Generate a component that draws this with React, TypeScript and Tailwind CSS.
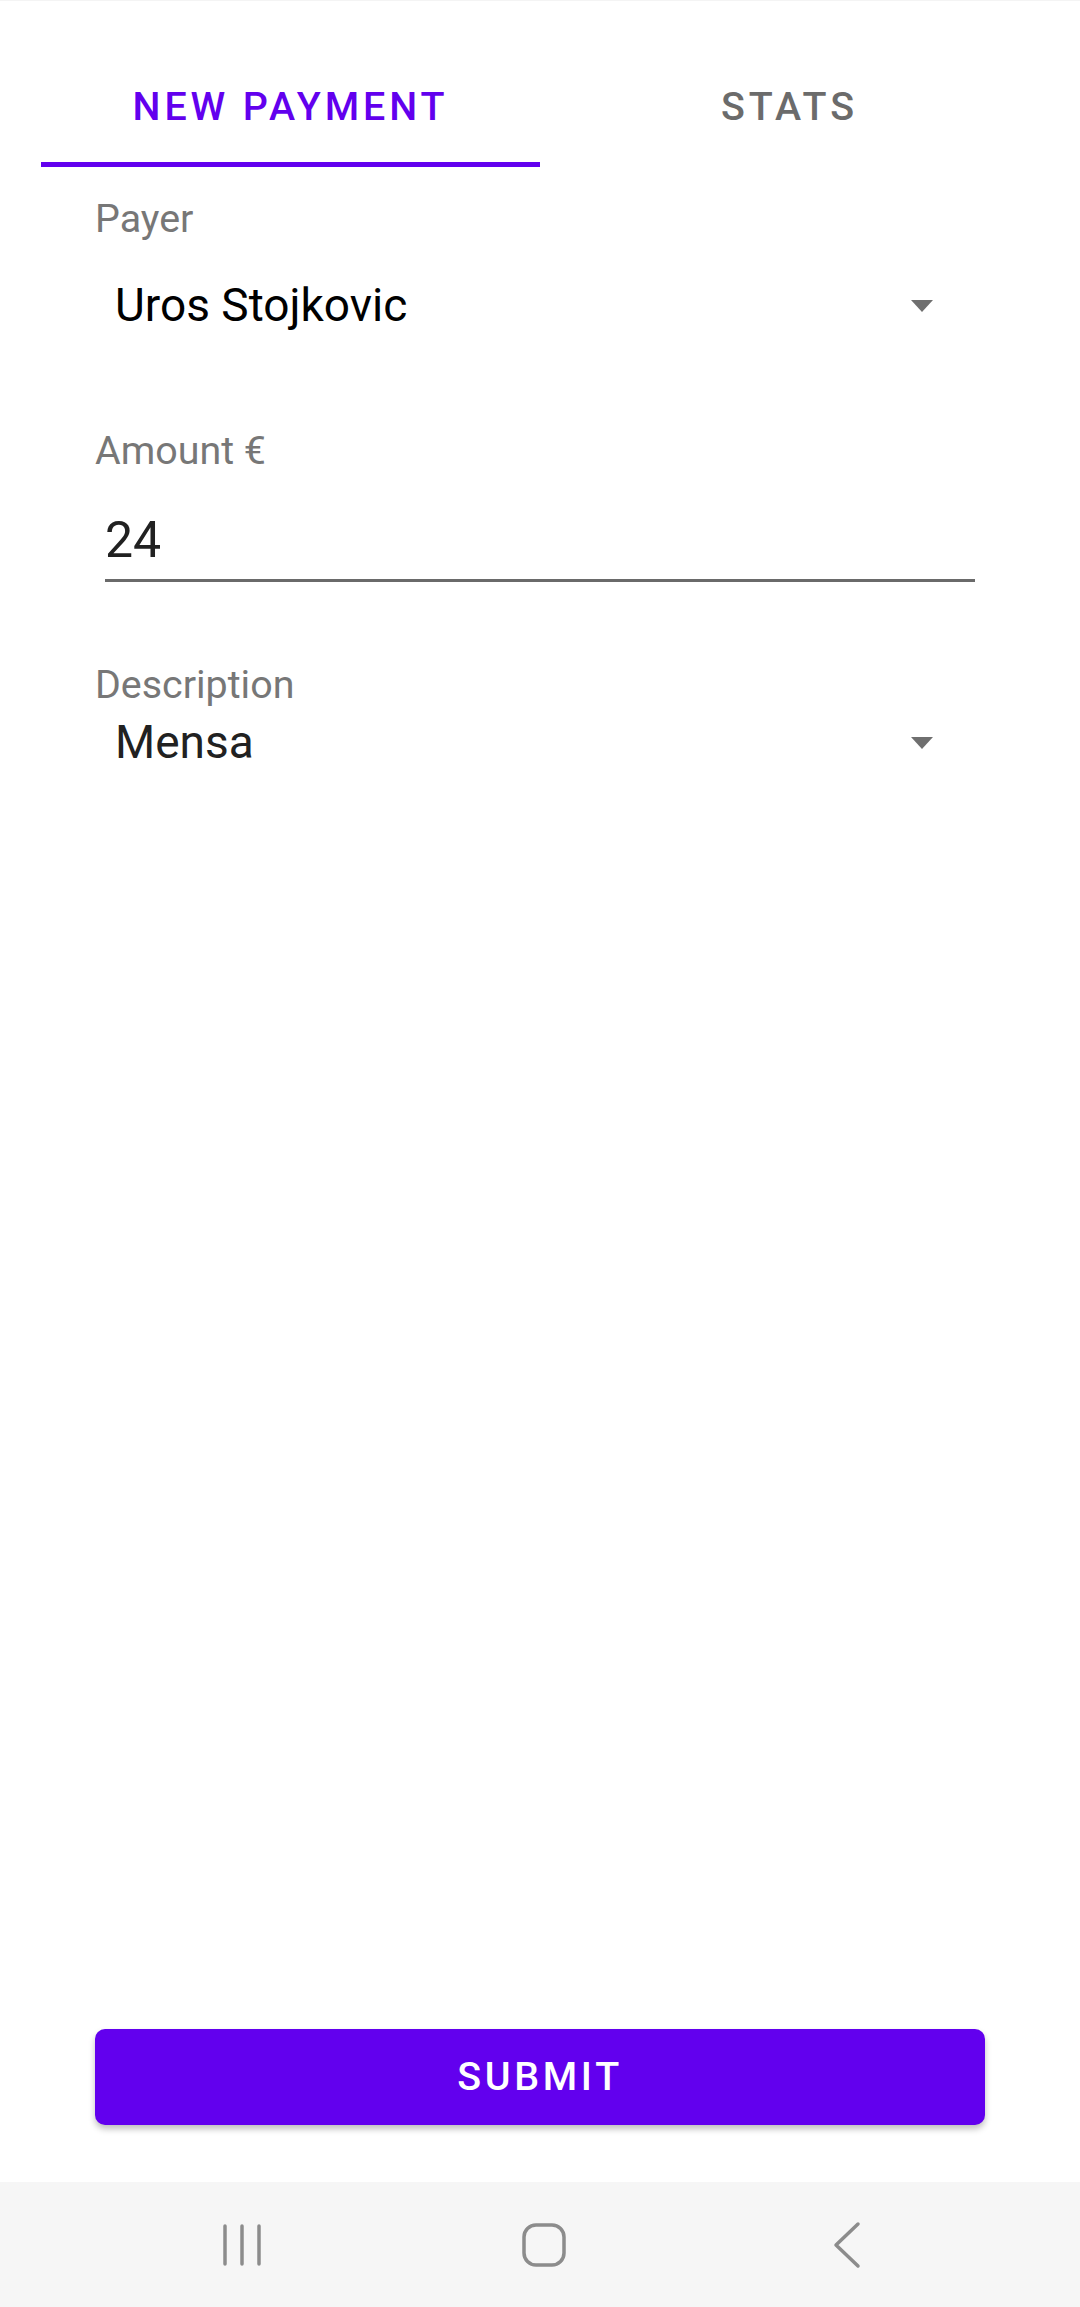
import React from "react";

function Caret() {
  return (
    <svg width="22" height="12" viewBox="0 0 22 12" className="block">
      <path d="M0 0 L22 0 L11 12 Z" fill="#6f6f6f" />
    </svg>
  );
}

export default function App() {
  return (
    <div
      className="w-[1080px] h-[2307px] flex flex-col bg-white overflow-hidden"
      style={{ fontFamily: "Roboto, 'Liberation Sans', sans-serif" }}
    >
      <div className="h-px bg-[#f4f4f4]" />
      {/* Tabs */}
      <div className="flex px-[41px] pt-[83px]">
        <div className="flex-1 flex flex-col items-center">
          <span className="text-[39.4px] leading-[46px] h-[46px] font-medium tracking-[3.9px] text-[#6200ee]">
            NEW PAYMENT
          </span>
          <div className="mt-[32px] h-[5px] w-full bg-[#6200ee]" />
        </div>
        <div className="flex-1 flex flex-col items-center">
          <span className="text-[39.4px] leading-[46px] h-[46px] font-medium tracking-[3.9px] text-[#6b6b6b]">
            STATS
          </span>
          <div className="mt-[32px] h-[5px] w-full" />
        </div>
      </div>

      {/* Form */}
      <div className="flex flex-col">
        <div className="pl-[95px] mt-[29px] text-[39.4px] leading-[45px] text-[#777777]">Payer</div>
        <div className="mt-[38px] ml-[115px] mr-[147px] flex items-center justify-between h-[53px]">
          <span className="text-[46px] leading-[53px] text-black">Uros Stojkovic</span>
          <Caret />
        </div>

        <div className="pl-[95px] mt-[96px] text-[39.4px] leading-[45px] text-[#777777]">Amount €</div>
        <div className="mt-[38px] ml-[105px] mr-[105px] flex flex-col">
          <span className="text-[50px] leading-[58px] text-[#212121]">24</span>
          <div className="mt-[10px] h-[3px] bg-[#6a6a6a]" />
        </div>

        <div className="pl-[95px] mt-[80px] text-[39.4px] leading-[45px] text-[#777777]">Description</div>
        <div className="mt-[9px] ml-[115px] mr-[147px] flex items-center justify-between h-[53px]">
          <span className="text-[46px] leading-[53px] text-[#212121]">Mensa</span>
          <Caret />
        </div>
      </div>

      <div className="flex-1" />

      {/* Submit */}
      <div className="px-[95px] mb-[57px]">
        <button className="w-full h-[96px] rounded-[10px] bg-[#6200ee] text-white text-[39.4px] font-medium tracking-[3.7px] shadow-[0_4px_6px_rgba(0,0,0,0.25)] flex items-center justify-center">
          SUBMIT
        </button>
      </div>

      {/* Nav bar */}
      <div className="h-[125px] bg-[#f6f6f6] flex items-center pl-[220px]">
        <svg width="44" height="44" viewBox="0 0 44 44">
          <g stroke="#8c8c8c" strokeWidth="3.5" strokeLinecap="round">
            <line x1="5" y1="3" x2="5" y2="41" />
            <line x1="22" y1="3" x2="22" y2="41" />
            <line x1="39" y1="3" x2="39" y2="41" />
          </g>
        </svg>
        <svg width="46" height="46" viewBox="0 0 46 46" className="ml-[257px]">
          <rect x="3" y="3" width="40" height="40" rx="12" fill="none" stroke="#8c8c8c" strokeWidth="3.5" />
        </svg>
        <svg width="30" height="48" viewBox="0 0 30 48" className="ml-[264px]">
          <path d="M27 3 L5 24 L27 45" fill="none" stroke="#8c8c8c" strokeWidth="3.5" strokeLinecap="round" strokeLinejoin="round" />
        </svg>
      </div>
    </div>
  );
}
